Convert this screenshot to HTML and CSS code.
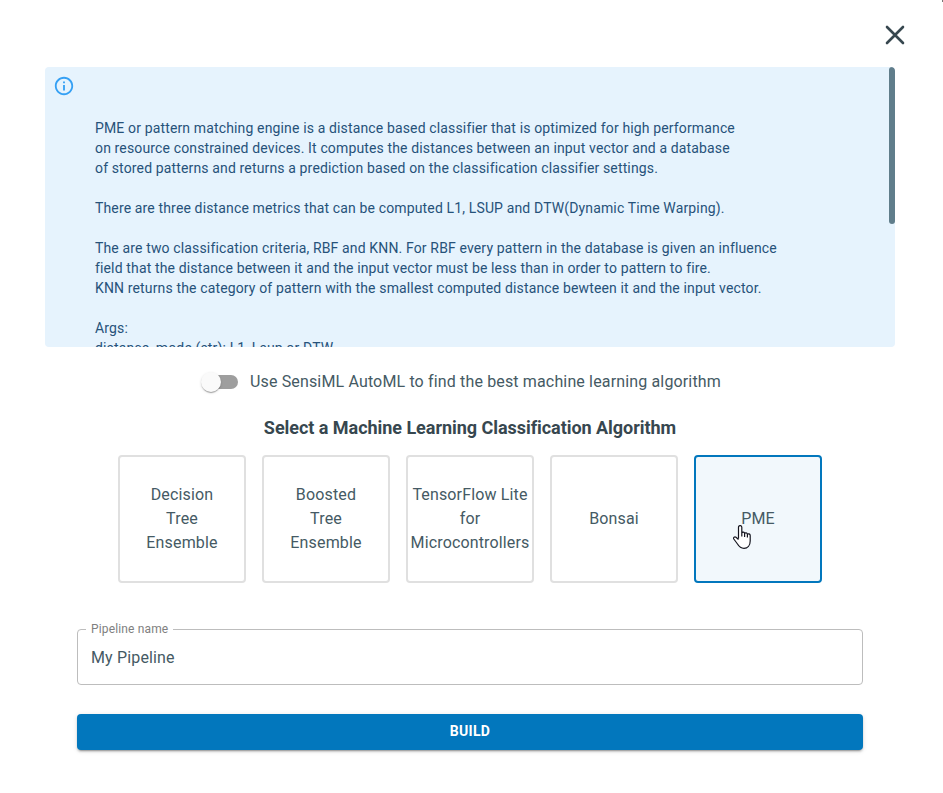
FILE: index.html
```html
<!DOCTYPE html>
<html lang="en">
<head>
<meta charset="utf-8">
<title>Build Pipeline</title>
<link rel="stylesheet" href="styles.css">
</head>
<body>
<main class="dialog">
  <header class="dialog-header">
    <button class="close" aria-label="Close">
      <svg viewBox="0 0 20 20" width="20" height="20"><path d="M2 2 18 18M18 2 2 18"/></svg>
    </button>
  </header>
  <section class="alert">
    <svg class="alert-icon" viewBox="0 0 24 24" width="22" height="22"><path d="M11 7h2v2h-2zM11 11h2v6h-2zM12 2C6.48 2 2 6.48 2 12s4.480 10 10 10 10-4.480 10-10S17.520 2 12 2zm0 18c-4.410 0-8-3.590-8-8s3.590-8 8-8 8 3.590 8 8-3.590 8-8 8z"/></svg>
    <pre class="alert-text">PME or pattern matching engine is a distance based classifier that is optimized for high performance
on resource constrained devices. It computes the distances between an input vector and a database
of stored patterns and returns a prediction based on the classification classifier settings.

There are three distance metrics that can be computed L1, LSUP and DTW(Dynamic Time Warping).

The are two classification criteria, RBF and KNN. For RBF every pattern in the database is given an influence
field that the distance between it and the input vector must be less than in order to pattern to fire.
KNN returns the category of pattern with the smallest computed distance bewteen it and the input vector.

Args:
distance_mode (str): L1, Lsup or DTW</pre>
    <span class="scroll-thumb"></span>
  </section>
  <label class="automl">
    <span class="switch"><span class="switch-thumb"></span></span>
    <span>Use SensiML AutoML to find the best machine learning algorithm</span>
  </label>
  <h2 class="title">Select a Machine Learning Classification Algorithm</h2>
  <div class="cards">
    <button class="card">Decision<br>Tree<br>Ensemble</button>
    <button class="card">Boosted<br>Tree<br>Ensemble</button>
    <button class="card">TensorFlow Lite<br>for<br>Microcontrollers</button>
    <button class="card">Bonsai</button>
    <button class="card selected">PME
      <svg class="cursor" viewBox="0 0 18 24" width="18" height="24"><path d="M5.500 13.500V2.300C5.500 0 8.800 0 8.800 2.300V8C9.200 6.700 11.500 6.900 11.600 8.500C12.200 7.300 14.300 7.700 14.400 9.300C15.200 8.300 17.200 8.800 17.200 10.600V16C17.200 20.500 14.500 23.300 11 23.300C7.500 23.300 6 21.500 4.500 19L.8 14C-.2 12.400 1.800 11.500 3 12.300L5.500 14.500M8.800 7.500V11.500M11.600 8.500V12M14.400 9.300V12.500"/></svg>
    </button>
  </div>
  <fieldset class="field">
    <legend>Pipeline name</legend>
    <input type="text" value="My Pipeline" aria-label="Pipeline name">
  </fieldset>
  <button class="build">BUILD</button>
</main>
</body>
</html>
```
FILE: styles.css
```css
* { box-sizing: border-box; }

body {
  margin: 0;
  background: #fff;
  color: #455a64;
  font-family: Roboto, sans-serif;
  font-size: 16px;
  line-height: 24px;
  letter-spacing: 0.15px;
}

button, input { font: inherit; letter-spacing: inherit; color: inherit; }

.dialog {
  position: relative;
  display: flex;
  flex-direction: column;
  height: 793px;
  padding: 0 48px 0 45px;
  overflow: hidden;
}

.dialog::after {
  content: "";
  position: absolute;
  top: 0;
  right: 0;
  width: 1px;
  height: 2px;
  background: #777;
}

.dialog-header {
  display: flex;
  justify-content: flex-end;
  height: 67px;
  padding-top: 25px;
  margin-right: -10px;
}

.close { width: 20px; height: 20px; padding: 0; border: 0; background: none; }
.close svg { display: block; fill: none; stroke: #37474f; stroke-width: 2.6; stroke-linecap: round; }

.alert {
  position: relative;
  display: flex;
  flex: none;
  align-items: flex-start;
  gap: 20px;
  height: 280px;
  padding: 8px;
  overflow: hidden;
  border-radius: 4px;
  background: #e6f3fd;
  color: #26527a;
}

.alert-icon { flex: none; fill: #35a0f4; }

.alert-text {
  margin: 43px 0 0;
  font: 14px/20px Roboto, sans-serif;
  letter-spacing: 0.142px;
}

.scroll-thumb {
  position: absolute;
  top: 0;
  right: 0;
  width: 6px;
  height: 157px;
  border-radius: 3px;
  background: #607d8b;
}

.automl {
  display: flex;
  align-items: center;
  gap: 12px;
  height: 24px;
  margin: 23px 0 0 159px;
}

.switch {
  position: relative;
  width: 34px;
  height: 14px;
  border-radius: 7px;
  background: #9e9e9e;
}

.switch-thumb {
  position: absolute;
  top: -3px;
  left: -3px;
  width: 20px;
  height: 20px;
  border-radius: 50%;
  background: #fafafa;
  box-shadow: 0 2px 1px -1px rgba(0,0,0,.2), 0 1px 1px rgba(0,0,0,.14), 0 1px 3px rgba(0,0,0,.12);
}

.title {
  margin: 22px 0 0;
  font-size: 18px;
  font-weight: 700;
  line-height: 24px;
  letter-spacing: -0.04px;
  text-align: center;
  color: #37474f;
}

.cards { display: flex; gap: 16px; margin: 15px 0 0 73px; }

.card {
  position: relative;
  flex: none;
  width: 128px;
  height: 128px;
  padding: 0;
  border: 2px solid #e0e0e0;
  border-radius: 4px;
  background: #fff;
}

.card.selected { border-color: #0277bd; background: #f2f8fc; }

.cursor { position: absolute; left: 37px; top: 68px; fill: #fff; stroke: #15151f; stroke-width: 1.2; stroke-linejoin: round; }

.field {
  height: 62px;
  margin: 40px 32px 0;
  padding: 0 13px;
  border: 1px solid #bdbdbd;
  border-radius: 4px;
}

.field legend {
  margin-left: -5px;
  padding: 0 5px;
  font-size: 12px;
  line-height: 12px;
  color: #808080;
}

.field input {
  display: block;
  width: 100%;
  height: 24px;
  margin-top: 11px;
  padding: 0;
  border: 0;
  outline: 0;
  background: none;
}

.build {
  height: 36px;
  margin: 29px 32px 0;
  padding: 0 0 2px;
  border: 0;
  border-radius: 4px;
  background: #0277bd;
  box-shadow: 0 3px 1px -2px rgba(0,0,0,.2), 0 2px 2px rgba(0,0,0,.14), 0 1px 5px rgba(0,0,0,.12);
  color: #fff;
  font-size: 14px;
  font-weight: 700;
  letter-spacing: 0.3px;
}
```
